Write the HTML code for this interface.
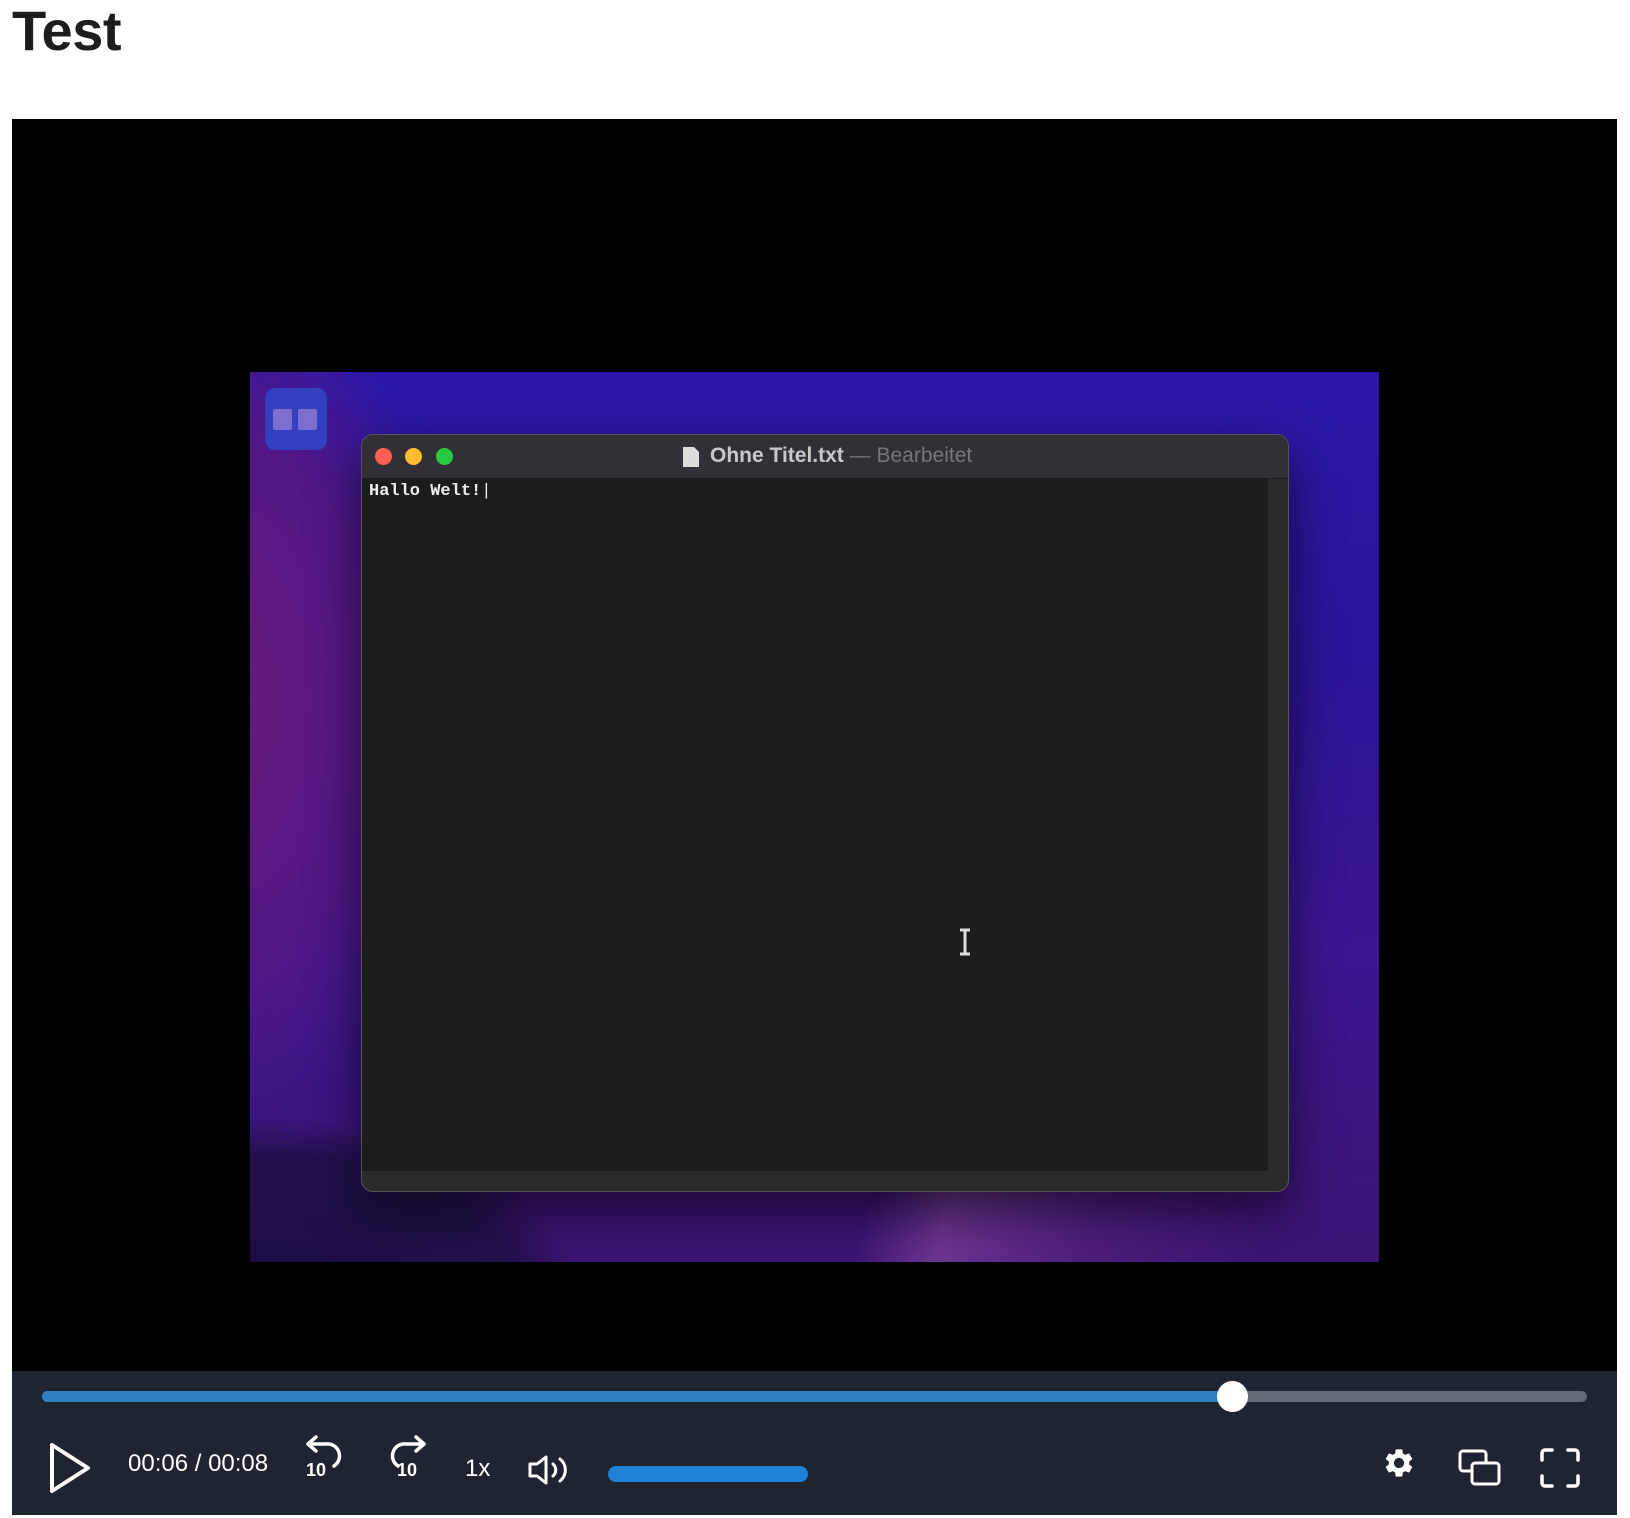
<!DOCTYPE html>
<html><head><meta charset="utf-8"><style>
*{margin:0;padding:0;box-sizing:border-box}
body{width:1630px;height:1518px;background:#fff;font-family:"Liberation Sans",sans-serif;position:relative;overflow:hidden}
h1{position:absolute;left:12px;top:-2px;font-size:56px;font-weight:bold;color:#1d1d1f;letter-spacing:-0.5px}
.video{position:absolute;left:12px;top:119px;width:1605px;height:1252px;background:#000}
.frame{position:absolute;left:250px;top:372px;width:1129px;height:890px;overflow:hidden;
background:radial-gradient(ellipse 420px 260px at 20px 940px,#1c0c42 0%,#22104c 60%,transparent 75%),
linear-gradient(105deg,transparent 55%,rgba(150,80,170,.55) 62%,rgba(120,50,150,.3) 75%,transparent 90%) bottom/100% 160px no-repeat,
radial-gradient(ellipse 300px 500px at -40px 330px,#6a1a7a 0%,#521786 55%,transparent 85%),
linear-gradient(180deg,#2c18a8 0%,#2a149a 30%,#3a1690 65%,#3c1472 100%)}
.dock{position:absolute;left:15px;top:16px;width:62px;height:62px;border-radius:10px;background:#3340c0}
.dock i{position:absolute;top:21px;width:19px;height:21px;background:#7d6ed0;border-radius:2px}
.win{position:absolute;left:361px;top:434px;width:928px;height:758px;border-radius:12px;background:#2a2a2a;border:1px solid #555;box-shadow:0 20px 50px rgba(0,0,0,.6);overflow:hidden}
.tb{height:44px;background:#323036;border-bottom:1px solid #1a1a1a;position:relative}
.dot{position:absolute;top:13px;width:17px;height:17px;border-radius:50%}
.ttl{position:absolute;left:348px;top:9px;font-size:21px;font-weight:bold;color:#c8c8c8}
.ttl span{color:#777;font-weight:normal}
.body{position:absolute;left:0;top:44px;width:906px;height:692px;background:#1c1c1c}
.txt{position:absolute;left:7px;top:3px;font-family:"Liberation Mono",monospace;font-weight:bold;font-size:17px;color:#eee}
.bar{position:absolute;left:12px;top:1371px;width:1605px;height:144px;background:#1e2430}
.prog{position:absolute;left:42px;top:1391px;width:1545px;height:11px;border-radius:6px;background:#646a74}
.prog b{position:absolute;left:0;top:0;height:11px;width:1190px;border-radius:6px;background:#2e7fc3}
.thumb{position:absolute;left:1217px;top:1381px;width:31px;height:31px;border-radius:50%;background:#fff}
.w{color:#fff;position:absolute}
svg{position:absolute}
</style></head><body>
<h1>Test</h1>
<div class="video">
</div>
<div class="frame">
 <div class="dock"><i style="left:8px"></i><i style="left:33px"></i></div>
</div>
<div class="win">
 <div class="tb">
  <div class="dot" style="left:13px;background:#fe5f57"></div>
  <div class="dot" style="left:43px;background:#febc2e"></div>
  <div class="dot" style="left:74px;background:#28c840"></div>
  <svg style="left:320px;top:11px" width="18" height="22"><path d="M1 1h11l5 5v15H1z" fill="#ddd"/></svg>
  <div class="ttl">Ohne Titel.txt <span>— Bearbeitet</span></div>
 </div>
 <div class="body"><div class="txt">Hallo Welt!<span style="font-weight:normal">|</span></div></div>
</div>
<svg style="left:957px;top:928px" width="16" height="28"><path d="M3 2h10M8 2v24M3 26h10" stroke="#ddd" stroke-width="3" fill="none"/></svg>
<div class="bar"></div>
<div class="prog"><b></b></div>
<div class="thumb"></div>
<svg style="left:48px;top:1441px" width="44" height="54"><path d="M4 4L40 27L4 50Z" fill="none" stroke="#fff" stroke-width="4" stroke-linejoin="round"/></svg>
<div class="w" style="left:128px;top:1450px;font-size:24px">00:06 / 00:08</div>
<svg style="left:302px;top:1434px" width="48" height="48"><path d="M6 10h18a12 12 0 0 1 8 22" fill="none" stroke="#fff" stroke-width="3.5" stroke-linecap="round"/><path d="M14 3L6 10l8 7" fill="none" stroke="#fff" stroke-width="3.5" stroke-linecap="round" stroke-linejoin="round"/><text x="4" y="42" font-family="Liberation Sans" font-weight="bold" font-size="18" fill="#fff">10</text></svg>
<svg style="left:382px;top:1434px" width="48" height="48"><path d="M42 10H24a12 12 0 0 0-8 22" fill="none" stroke="#fff" stroke-width="3.5" stroke-linecap="round"/><path d="M34 3l8 7-8 7" fill="none" stroke="#fff" stroke-width="3.5" stroke-linecap="round" stroke-linejoin="round"/><text x="15" y="42" font-family="Liberation Sans" font-weight="bold" font-size="18" fill="#fff">10</text></svg>
<div class="w" style="left:465px;top:1455px;font-size:24px">1x</div>
<svg style="left:527px;top:1454px" width="46" height="32"><path d="M3 10h7l9-7v26l-9-7H3z" fill="none" stroke="#fff" stroke-width="3" stroke-linejoin="round"/><path d="M26 10a8 8 0 0 1 0 12M33 5a14 14 0 0 1 0 22" fill="none" stroke="#fff" stroke-width="3" stroke-linecap="round"/></svg>
<div style="position:absolute;left:608px;top:1466px;width:200px;height:16px;border-radius:8px;background:#1e82d6"></div>
<svg style="left:1382px;top:1446px" width="34" height="34" viewBox="0 0 24 24"><path fill="#fff" d="M19.14 12.94c.04-.3.06-.61.06-.94s-.02-.64-.07-.94l2.030-1.58a.49.49 0 0 0 .12-.61l-1.92-3.32a.49.49 0 0 0-.59-.22l-2.39.96c-.5-.38-1.03-.7-1.62-.94l-.36-2.54a.48.48 0 0 0-.48-.41h-3.84c-.24 0-.43.17-.47.41l-.36 2.54c-.59.24-1.130.57-1.62.94l-2.39-.96a.48.48 0 0 0-.59.22L2.74 8.87c-.12.21-.08.47.12.61l2.03 1.58c-.05.3-.09.63-.09.94s.02.64.07.94l-2.03 1.58a.49.49 0 0 0-.12.61l1.92 3.32c.12.22.37.29.59.22l2.39-.96c.5.38 1.03.7 1.62.94l.36 2.54c.05.24.24.41.48.41h3.84c.24 0 .44-.17.47-.41l.36-2.54c.59-.24 1.13-.56 1.62-.94l2.39.96c.22.08.47 0 .59-.22l1.92-3.32c.12-.22.07-.47-.12-.61zM12 15.6A3.6 3.6 0 1 1 12 8.4a3.6 3.6 0 0 1 0 7.2z"/></svg>
<svg style="left:1458px;top:1449px" width="44" height="38"><rect x="2" y="2" width="26" height="20" rx="3" fill="none" stroke="#fff" stroke-width="3"/><rect x="14" y="14" width="27" height="21" rx="3" fill="#1e2430" stroke="#fff" stroke-width="3"/></svg>
<svg style="left:1539px;top:1447px" width="42" height="42" fill="none" stroke="#fff" stroke-width="3.5" stroke-linecap="round"><path d="M3 13V6a3 3 0 0 1 3-3h7M29 3h7a3 3 0 0 1 3 3v7M39 29v7a3 3 0 0 1-3 3h-7M13 39H6a3 3 0 0 1-3-3v-7"/></svg>
</body></html>
